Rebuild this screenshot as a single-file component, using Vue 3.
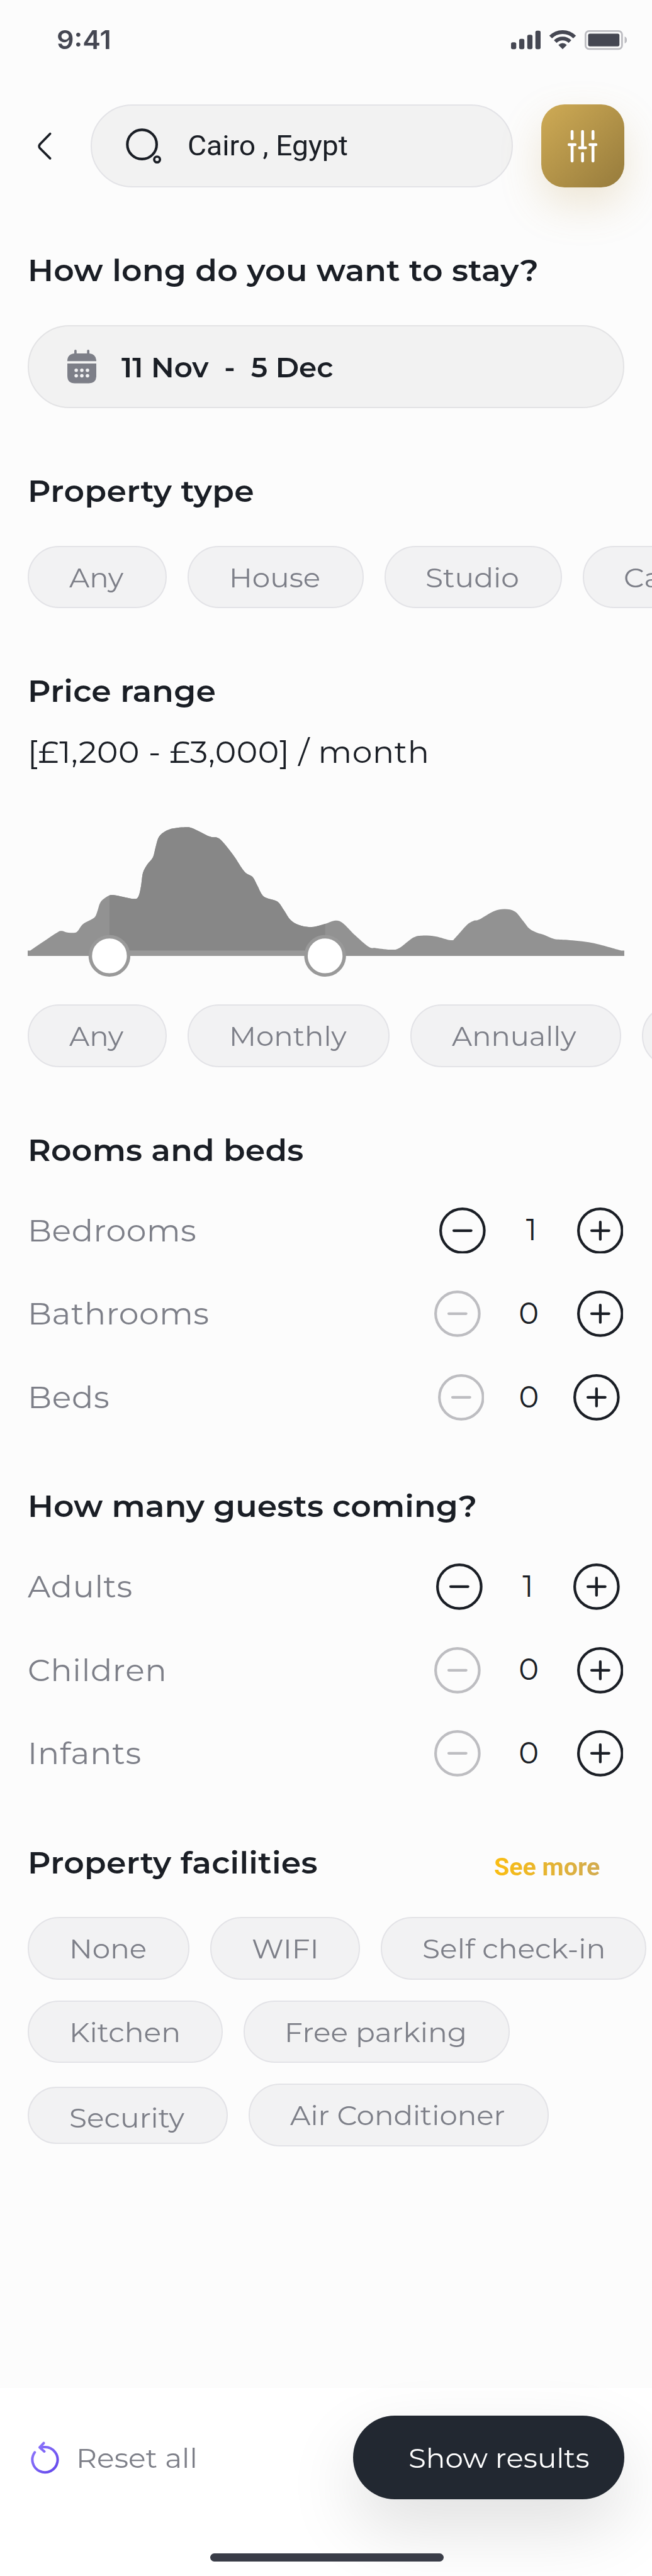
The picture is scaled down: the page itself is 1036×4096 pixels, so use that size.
<script setup>
const ink = document.createElement('canvas').getContext('2d')

// v-track="width": widens the glyphs slightly, then spreads the letters,
// so the drawn text spans the given width
const vTrack = {
  mounted(el, { value }) {
    const css = getComputedStyle(el)
    ink.font = `${css.fontWeight} ${css.fontSize} ${css.fontFamily}`
    const text = el.textContent
    const box = ink.measureText(text)
    const drawn = box.actualBoundingBoxRight + box.actualBoundingBoxLeft
    const stretch = Math.max(1, Math.min(1.055, value / drawn))
    el.style.transform = `scaleX(${stretch.toFixed(3)})`
    el.style.letterSpacing = `${((value / stretch - drawn) / (text.length - 1)).toFixed(2)}px`
  },
}

const propertyTypes = [
  { label: 'Any', width: 240, text: 94 },
  { label: 'House', width: 303, text: 151 },
  { label: 'Studio', width: 306, text: 158 },
  { label: 'Cabin', width: 290, text: 140 },
]
const periods = [
  { label: 'Any', width: 240, text: 94 },
  { label: 'Monthly', width: 348, text: 198 },
  { label: 'Annually', width: 363, text: 215 },
  { label: '', width: 260, text: 0 },
]
const facilities = [
  [
    { label: 'None', width: 279, text: 127 },
    { label: 'WIFI', width: 258, text: 109 },
    { label: 'Self check-in', width: 458, text: 310 },
  ],
  [
    { label: 'Kitchen', width: 336, text: 183 },
    { label: 'Free parking', width: 459, text: 305 },
  ],
  [
    { label: 'Security', width: 345, text: 197, low: true },
    { label: 'Air Conditioner', width: 518, text: 370 },
  ],
]
const counters = [
  {
    title: 'Rooms and beds',
    width: 471,
    rows: [
      { label: 'Bedrooms', text: 284, value: 1, gap: 157, end: 50 },
      { label: 'Bathrooms', text: 306, value: 0, gap: 166, end: 50 },
      { label: 'Beds', text: 134, value: 0, gap: 154, end: 56 },
    ],
  },
  {
    title: 'How many guests coming?',
    width: 769,
    rows: [
      { label: 'Adults', text: 179, value: 1, gap: 157, end: 56 },
      { label: 'Children', text: 233, value: 0, gap: 166, end: 50 },
      { label: 'Infants', text: 189, value: 0, gap: 166, end: 50 },
    ],
  },
]

// price distribution outline
const curve = [
  [52.4, 1641], [95.7, 1611.7], [106, 1607], [115, 1609.5], [123, 1610.3], [132.8, 1608.5], [142.3, 1596],
  [153, 1589.7], [163.8, 1583], [168.6, 1571.7], [174, 1556.7], [187, 1546.5], [197, 1545], [212, 1548],
  [231.5, 1551.7], [239, 1547.5], [243.4, 1530], [246.8, 1506.7], [254.5, 1492], [264, 1480], [268.8, 1461.7],
  [275.5, 1443], [292.7, 1431.7], [319.5, 1428], [333, 1430], [361.6, 1444], [378.8, 1448], [401.8, 1475],
  [422, 1504.7], [436, 1514], [444.7, 1530], [455.4, 1547.7], [478.3, 1556], [489.8, 1571], [501.3, 1588],
  [516.6, 1597], [537.6, 1600.3], [561, 1594.7], [578.6, 1589], [591.4, 1593.3], [612.6, 1614.3],
  [635.8, 1634], [649.3, 1636.7], [676.3, 1639.3], [689.8, 1636], [713, 1618.5], [728.4, 1615],
  [751.5, 1616.5], [777.8, 1623], [786.2, 1618], [805.5, 1596.7], [817, 1589.7], [826.8, 1587.3],
  [851.8, 1573], [871, 1569.3], [888.5, 1573.5], [902, 1589], [913.6, 1603.3], [927, 1610.3],
  [938.6, 1613.7], [956, 1620.7], [979, 1622.5], [1021.6, 1627.7], [1071.8, 1641],
]
const at = (i) => curve[Math.max(0, Math.min(curve.length - 1, i))]
let hill = `M48 1650V1641H${curve[0][0]}`
for (let i = 0; i < curve.length - 1; i++) {
  const [p, a, b, n] = [at(i - 1), at(i), at(i + 1), at(i + 2)]
  const c = [a[0] + (b[0] - p[0]) / 6, a[1] + (b[1] - p[1]) / 6, b[0] - (n[0] - a[0]) / 6, b[1] - (n[1] - a[1]) / 6]
  hill += `C${c.map((v) => v.toFixed(1)).join(' ')} ${b[0]} ${b[1]}`
}
hill += 'H1077V1650Z'
</script>

<template>
  <div class="screen">
    <div class="status">
      <span v-track="89" class="clock">9:41</span>
      <svg class="signals" viewBox="881 51 200 36" width="200" height="36">
        <g fill="#454752">
          <rect x="881" y="73" width="9" height="12" rx="3" />
          <rect x="895" y="67" width="9" height="18" rx="3" />
          <rect x="909" y="60" width="9" height="25" rx="3" />
          <rect x="923" y="53" width="9" height="32" rx="3" />
          <path d="M970 85L962.7 77.5Q970 71 977.3 77.5Z" />
          <rect x="1014" y="58" width="54" height="22" rx="3" />
        </g>
        <g fill="none" stroke="#454752" stroke-width="6.6">
          <path d="M949.3 64A29 29 0 0 1 990.7 64" />
          <path d="M957.3 71.8A18 18 0 0 1 982.7 71.8" />
        </g>
        <rect x="1009.5" y="53.5" width="63" height="31" rx="6" fill="none" stroke="#bcbcc1" stroke-width="3" />
        <path d="M1077 63C1082.300 65 1082.300 73 1077 75Z" fill="#bcbcc1" />
      </svg>
    </div>

    <header class="top">
      <svg class="back" viewBox="0 0 28 50" width="28" height="50">
        <path d="M23.500 4L6 22Q3 25.500 6 29L23.500 46.500" />
      </svg>
      <div class="search">
        <svg viewBox="216 219 66 66" width="66" height="66" fill="none" stroke="#1a1e25">
          <circle cx="246" cy="249" r="25.300" stroke-width="4.500" />
          <circle cx="272" cy="275" r="5" stroke-width="4" />
        </svg>
        <span v-track="274">Cairo , Egypt</span>
      </div>
      <div class="filter">
        <svg viewBox="975 220 60 64" width="60" height="64">
          <path d="M987 226.500V239M987 250V277.500M1005 226.500V254M1005 264.500V277.500M1023 226.500V239M1023 250V277.500M981.800 249.300H992.200M999.800 254.700H1010.200M1017.800 249.300H1028.200" />
        </svg>
      </div>
    </header>

    <h2><span v-track="875">How long do you want to stay?</span></h2>
    <div class="dates">
      <svg viewBox="116 603 50 58" width="50" height="58">
        <path d="M128 605a2 2 0 0 1 4 0V609.500H150V605a2 2 0 0 1 4 0V609.600Q166 611 166 622.700H116Q116 611 128 609.600Z" fill="#7d7f88" />
        <path d="M116 627H166V648Q166 661 153 661H129Q116 661 116 648Z" fill="#7d7f88" />
        <g fill="#f2f2f3">
          <circle cx="131.300" cy="638.500" r="3" /><circle cx="141" cy="638.500" r="3" /><circle cx="150.700" cy="638.500" r="3" />
          <circle cx="131.300" cy="648" r="3" /><circle cx="141" cy="648" r="3" /><circle cx="150.700" cy="648" r="3" />
        </g>
      </svg>
      <span v-track="365">11 Nov&nbsp; -&nbsp; 5 Dec</span>
    </div>

    <h2><span v-track="385">Property type</span></h2>
    <div class="chips first">
      <div v-for="c in propertyTypes" :key="c.label" class="chip" :style="{ width: c.width + 'px' }">
        <span v-track="c.text">{{ c.label }}</span>
      </div>
    </div>

    <h2><span v-track="319">Price range</span></h2>
    <p class="price"><span v-track="683">[£1,200 - £3,000] / month</span></p>
    <svg class="chart" viewBox="48 1420 1029 270" width="1029" height="270">
      <defs>
        <clipPath id="chosen"><rect x="189" y="1420" width="372" height="221" /></clipPath>
      </defs>
      <path :d="hill" fill="#929292" />
      <path :d="hill" fill="#878787" clip-path="url(#chosen)" />
      <rect x="189" y="1641" width="372" height="9" fill="#999" />
      <g fill="#fff" stroke="#999" stroke-width="6">
        <circle cx="189" cy="1650" r="33" />
        <circle cx="561" cy="1650" r="33" />
      </g>
    </svg>
    <div class="chips periods">
      <div v-for="c in periods" :key="c.label" class="chip" :style="{ width: c.width + 'px' }">
        <span v-if="c.label" v-track="c.text">{{ c.label }}</span>
      </div>
    </div>

    <section v-for="(group, g) in counters" :key="group.title" class="group" :class="{ later: g > 0 }">
      <h2><span v-track="group.width">{{ group.title }}</span></h2>
      <div class="rows">
        <div v-for="row in group.rows" :key="row.label" class="row" :style="{ paddingRight: row.end + 'px' }">
          <span v-track="row.text" class="name">{{ row.label }}</span>
          <svg class="knob" :class="{ off: row.value === 0 }" viewBox="0 0 80 80" width="80" height="80">
            <circle cx="40" cy="40" r="37.700" />
            <path d="M25 40H55" />
          </svg>
          <span class="count" :style="{ width: row.gap + 'px' }">{{ row.value }}</span>
          <svg class="knob" viewBox="0 0 80 80" width="80" height="80">
            <circle cx="40" cy="40" r="37.700" />
            <path d="M25 40H55M40 25V55" />
          </svg>
        </div>
      </div>
    </section>

    <div class="headline">
      <h2><span v-track="495">Property facilities</span></h2>
      <a v-track="181" class="more">See more</a>
    </div>
    <div class="facilities">
      <div v-for="(line, i) in facilities" :key="i" class="chips">
        <div v-for="c in line" :key="c.label" class="chip" :class="{ low: c.low }" :style="{ width: c.width + 'px' }">
          <span v-track="c.text">{{ c.label }}</span>
        </div>
      </div>
    </div>

    <footer class="bottom">
      <div class="actions">
        <div class="reset">
          <svg viewBox="50 4212 56 60" width="56" height="60">
            <defs>
              <linearGradient id="violet" x1="0" y1="0" x2="1" y2="1">
                <stop offset="0" stop-color="#917afd" />
                <stop offset="1" stop-color="#6246ea" />
              </linearGradient>
            </defs>
            <path d="M60 4233A21.800 21.800 0 1 0 78 4224H69M75.500 4217L68.500 4224.500L76.500 4231.500" stroke="url(#violet)" />
          </svg>
          <span v-track="199">Reset all</span>
        </div>
        <div class="show"><span v-track="309">Show results</span></div>
      </div>
      <div class="home"></div>
    </footer>
  </div>
</template>

<style>
body {
  background: #fcfcfc;
  overflow: hidden;
}
</style>

<style scoped>
.screen {
  zoom: 0.92128;
  width: 1125px;
  height: 4446px;
  overflow: hidden;
  display: flex;
  flex-direction: column;
  background: #fcfcfc;
  color: #1a1e25;
  font-family: Montserrat, Inter, sans-serif;
  white-space: nowrap;
}
.screen * {
  box-sizing: border-box;
}
.screen span,
.more {
  display: inline-block;
  transform-origin: 0 50%;
}
svg {
  display: block;
  flex: none;
}
.status {
  height: 138px;
  flex: none;
  display: flex;
  align-items: center;
  justify-content: space-between;
  padding: 0 44px 0 98px;
}
.clock {
  font: 600 45px/50px Inter, sans-serif;
  color: #454752;
  padding-bottom: 1px;
}
.top {
  display: flex;
  align-items: center;
  height: 144px;
  flex: none;
  margin-top: 42px;
  padding-left: 63px;
}
.back {
  fill: none;
  stroke: #1a1e25;
  stroke-width: 4;
  stroke-linecap: round;
}
.search {
  margin-left: 65px;
  width: 729px;
  height: 144px;
  display: flex;
  align-items: center;
  padding-left: 57px;
  border: 3px solid #e3e3e7;
  border-radius: 72px;
  background: #f2f2f2;
  font: 400 48px/60px Roboto, sans-serif;
}
.search span {
  margin-left: 42px;
  padding-top: 1px;
}
.filter {
  margin-left: 48px;
  width: 144px;
  height: 144px;
  display: flex;
  align-items: center;
  justify-content: center;
  border-radius: 40px;
  background: linear-gradient(135deg, #cfab55, #967b3c);
  box-shadow: 0 30px 72px rgba(186, 152, 74, 0.22);
}
.filter path {
  fill: none;
  stroke: #fff;
  stroke-width: 5;
  stroke-linecap: round;
}
h2 {
  margin: 113px 0 64px 48px;
  padding-top: 1px;
  height: 60px;
  flex: none;
  font-size: 52px;
  font-weight: 600;
  line-height: 60px;
}
.dates {
  margin: 0 48px;
  height: 144px;
  flex: none;
  display: flex;
  align-items: center;
  padding-left: 66px;
  border: 3px solid #e3e3e5;
  border-radius: 72px;
  background: #f2f2f2;
  font-size: 47px;
  font-weight: 600;
}
.dates span {
  margin-left: 43px;
  padding-top: 2px;
}
.chips {
  display: flex;
  align-items: center;
  gap: 36px;
  height: 108px;
  flex: none;
  padding-left: 48px;
}
.chip {
  flex: none;
  height: 108px;
  padding: 2px 0 0 69px;
  border: 3px solid #e3e3e7;
  border-radius: 54px;
  background: #f2f2f3;
  color: #7d7f88;
  font-size: 47px;
  line-height: 102px;
}
.chip.low {
  height: 99px;
}
.price {
  margin: -19px 0 92px 48px;
  padding-top: 1px;
  height: 60px;
  flex: none;
  font-size: 52px;
  line-height: 60px;
}
.chart {
  margin: 0 0 44px 48px;
}
.rows {
  padding-top: 5px;
  display: flex;
  flex-direction: column;
  gap: 64px;
}
.group.later h2 {
  margin-top: 118px;
}
.row {
  display: flex;
  align-items: center;
  height: 80px;
  padding-left: 48px;
  font-size: 52px;
  line-height: 80px;
}
.name {
  margin-right: auto;
  padding-top: 2px;
  color: #7d7f88;
}
.count {
  text-align: center;
  padding-bottom: 1px;
}
.knob {
  fill: none;
  stroke: #1a1e25;
  stroke-width: 4.6;
  stroke-linecap: round;
}
.knob.off {
  stroke: #bdbdc1;
}
.headline {
  display: flex;
  align-items: flex-start;
  justify-content: space-between;
  padding-right: 94px;
  margin-top: 5px;
}
.more {
  margin-top: 121px;
  font: 700 42px/60px Roboto, sans-serif;
  color: transparent;
  background: linear-gradient(90deg, #fabd12, #d2ab50);
  background-clip: text;
}
.facilities {
  display: flex;
  flex-direction: column;
  gap: 36px;
}
.bottom {
  margin-top: 417px;
  flex: 1;
  display: flex;
  flex-direction: column;
  background: #fff;
}
.actions {
  margin: 48px 48px 0 50px;
  display: flex;
  align-items: center;
  justify-content: space-between;
}
.reset {
  display: flex;
  align-items: center;
  color: #7d7f88;
  font-size: 47px;
  line-height: 60px;
}
.reset span {
  margin-left: 25px;
  padding-top: 2px;
}
.reset path {
  fill: none;
  stroke-width: 4.4;
  stroke-linecap: round;
  stroke-linejoin: round;
}
.show {
  width: 468px;
  height: 144px;
  padding: 2px 0 0 95px;
  border-radius: 72px;
  background: #222831;
  box-shadow: 0 48px 120px rgba(0, 0, 0, 0.13);
  color: #fff;
  font-size: 47px;
  line-height: 144px;
}
.home {
  position: relative;
  align-self: center;
  width: 402px;
  height: 15px;
  margin: 93px 0 0 3px;
  border-radius: 8px;
  background: #3a3d48;
}
</style>
